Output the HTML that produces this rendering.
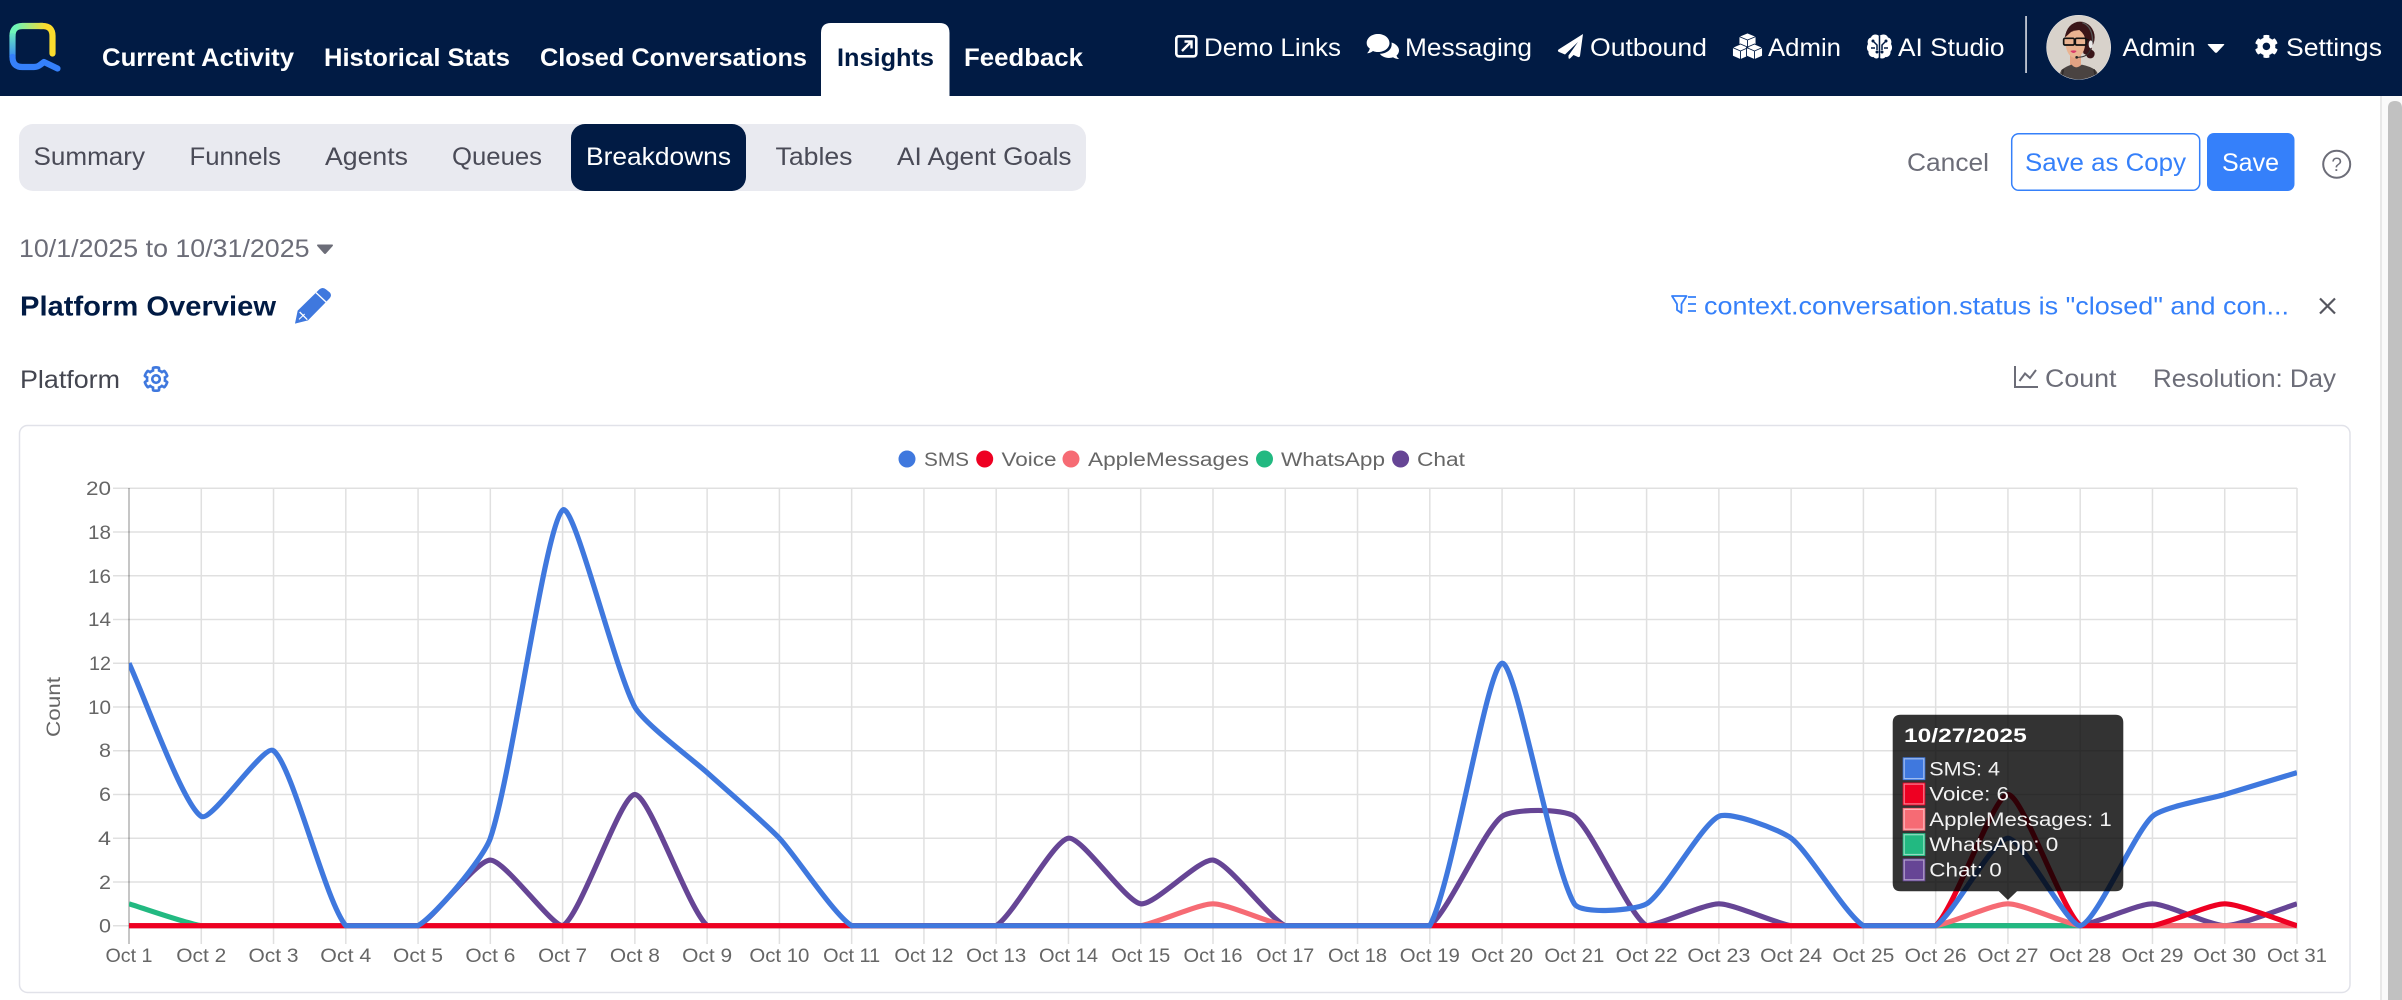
<!DOCTYPE html>
<html lang="en"><head><meta charset="utf-8"><title>Platform Overview</title>
<style>
html,body{margin:0;padding:0;background:#fff;width:2402px;height:1000px;overflow:hidden}
svg{display:block}
text{font-family:"Liberation Sans",Arial,sans-serif}
.n{font-size:25px;fill:#fff}
.b{font-weight:700}
.t{font-size:25px;fill:#4a4b57}
.g{font-size:25px;fill:#6c6d78}
.c{font-size:19px;fill:#666}
.x{text-anchor:middle}
.y{text-anchor:end}
.l{fill:none;stroke-width:5.2;vector-effect:non-scaling-stroke;stroke-linejoin:round}
.tt{font-size:19px;fill:#f2f2f2}
</style></head><body>
<svg xmlns="http://www.w3.org/2000/svg" width="2402" height="1000" viewBox="0 0 2402 1000">
<defs>
<linearGradient id="lgT" gradientUnits="userSpaceOnUse" x1="16" y1="0" x2="46" y2="0"><stop offset="0" stop-color="#6ef5b8"/><stop offset="1" stop-color="#fbdc2d"/></linearGradient>
<linearGradient id="lgL" gradientUnits="userSpaceOnUse" x1="0" y1="30" x2="0" y2="60"><stop offset="0" stop-color="#6ef5b8"/><stop offset="1" stop-color="#3580fa"/></linearGradient>
<clipPath id="plot"><rect x="129" y="484" width="2168" height="446"/></clipPath>
<clipPath id="av"><circle cx="176" cy="142" r="96"/></clipPath>
<path id="cog" d="M487.4 315.7l-42.6-24.6c4.3-23.2 4.3-47 0-70.2l42.6-24.6c4.9-2.8 7.1-8.6 5.5-14-11.1-35.6-30-67.8-54.7-94.6-3.8-4.1-10-5.1-14.8-2.3L380.8 110c-17.9-15.4-38.5-27.3-60.8-35.1V25.8c0-5.6-3.9-10.5-9.4-11.7-36.7-8.2-74.3-7.8-109.2 0-5.5 1.2-9.4 6.1-9.4 11.7V75c-22.2 7.9-42.8 19.8-60.8 35.1L88.7 85.5c-4.9-2.8-11-1.9-14.8 2.3-24.7 26.7-43.6 58.9-54.7 94.6-1.7 5.4.6 11.2 5.5 14L67.3 221c-4.3 23.2-4.3 47 0 70.2l-42.6 24.6c-4.9 2.8-7.1 8.6-5.5 14 11.1 35.6 30 67.8 54.7 94.6 3.8 4.1 10 5.1 14.8 2.3l42.6-24.6c17.9 15.4 38.5 27.3 60.8 35.1v49.2c0 5.6 3.9 10.5 9.4 11.7 36.7 8.2 74.3 7.8 109.2 0 5.5-1.2 9.4-6.1 9.4-11.7v-49.2c22.2-7.9 42.8-19.8 60.8-35.1l42.6 24.6c4.9 2.8 11 1.9 14.8-2.3 24.7-26.7 43.6-58.9 54.7-94.6 1.5-5.5-.7-11.3-5.6-14.1zM256 336c-44.1 0-80-35.9-80-80s35.9-80 80-80 80 35.9 80 80-35.9 80-80 80z"/>
</defs>

<!-- header -->
<rect width="2402" height="96" fill="#011b44"/>
<g fill="none" stroke-width="6.2" stroke-linecap="round" stroke-linejoin="round">
<path d="M52.5 53.5V36Q52.5 26 42.5 26H40" stroke="#fbdc2d"/>
<path d="M42.5 26H22.5Q12.5 26 12.5 36" stroke="url(#lgT)"/>
<path d="M12.5 36V57" stroke="url(#lgL)"/>
<path d="M12.5 57Q12.5 67 22.5 67H34Q37.5 67 40 65L44 62 57.5 68.5" stroke="#3580fa"/>
</g>
<path d="M821 96V33Q821 23 831 23H939.5Q949.5 23 949.5 33V96Z" fill="#fff"/>
<text class="n b" x="102" y="66" textLength="192" lengthAdjust="spacingAndGlyphs">Current Activity</text>
<text class="n b" x="324" y="66" textLength="186" lengthAdjust="spacingAndGlyphs">Historical Stats</text>
<text class="n b" x="540" y="66" textLength="267" lengthAdjust="spacingAndGlyphs">Closed Conversations</text>
<text class="n b" x="837" y="66" textLength="97" lengthAdjust="spacingAndGlyphs" style="fill:#011b44">Insights</text>
<text class="n b" x="964" y="66" textLength="119" lengthAdjust="spacingAndGlyphs">Feedback</text>

<!-- demo links icon -->
<rect x="1176.3" y="36.3" width="20" height="20" rx="2.5" fill="none" stroke="#fff" stroke-width="2.6"/>
<path d="M1182 51L1191 42M1184.5 41.500H1191.500V48.500" fill="none" stroke="#fff" stroke-width="2.400"/>
<text class="n" x="1204" y="56" textLength="137" lengthAdjust="spacingAndGlyphs">Demo Links</text>
<!-- messaging icon -->
<path d="M1378 34C1384.500 34 1389.500 38 1389.500 43C1389.500 48 1384.500 52 1378 52C1376 52 1374.500 51.700 1373 51C1371 52.500 1369 53.300 1367 53.300C1369 51.500 1369.500 49.500 1369.800 48.500C1367.500 47 1366.700 45 1366.700 43C1366.700 38 1371.500 34 1378 34Z" fill="#fff"/>
<path d="M1391.500 42.500C1396 43.800 1399 47 1399 50.500C1399 52.500 1398 54.300 1396.500 55.500C1397 57 1397.800 58 1399 59C1396.500 59 1394.500 58.300 1393 57.300C1391.500 57.800 1390.500 58 1389 58C1385 58 1381.500 56.300 1379.800 53.800C1386.500 53.800 1392.800 49.500 1391.500 42.500Z" fill="#fff"/>
<text class="n" x="1405" y="56" textLength="127" lengthAdjust="spacingAndGlyphs">Messaging</text>
<!-- plane icon -->
<path d="M1583 34L1558.500 49.500Q1557 51 1559 52L1565 54.500L1578 42L1568.500 55.500V58Q1569 59.500 1570.500 58L1573.500 55L1578 57Q1579.500 57.500 1580 56Z" fill="#fff"/>
<text class="n" x="1590" y="56" textLength="117" lengthAdjust="spacingAndGlyphs">Outbound</text>
<!-- cubes icon -->
<g fill="#fff" stroke="#011b44" stroke-width=".9" stroke-linejoin="round">
<path d="M1747.500 33L1756 36.500V46L1747.500 49.500L1739 46V36.500Z"/>
<path d="M1740.500 44L1748.500 47.500V56L1740.500 59.500L1732.500 56V47.500Z"/>
<path d="M1754.500 44L1762.500 47.500V56L1754.500 59.500L1746.500 56V47.500Z"/>
<path d="M1739 36.500L1747.500 40L1756 36.500M1747.500 40V48M1732.500 47.500L1740.500 51L1748.500 47.500M1740.500 51V59M1746.500 47.500L1754.500 51L1762.500 47.500M1754.500 51V59" fill="none"/>
</g>
<text class="n" x="1768" y="56" textLength="73" lengthAdjust="spacingAndGlyphs">Admin</text>
<!-- brain icon -->
<path d="M1879 36C1877 33.500 1872 34 1871 37.500C1868 38 1867 41.500 1868 44C1866.500 46.500 1866.500 49.500 1868.500 51.500C1868 55 1871 57.500 1873.500 57C1875 59 1878 59 1879 57C1880 59 1884 59 1885.500 57C1888 57.500 1891 55 1890.500 51.500C1892.500 49.500 1892.500 46.500 1891 44C1892 41.500 1891 38 1888 37.500C1887 34 1882 33.500 1879.500 36Z" fill="#fff"/>
<path d="M1879.500 36V58M1873 41L1877 45V50M1886 41L1882 45V50M1871 48H1875M1888 48H1884" fill="none" stroke="#011b44" stroke-width="1.500"/>
<g fill="#011b44"><circle cx="1873" cy="41" r="1.500"/><circle cx="1886" cy="41" r="1.500"/><circle cx="1877" cy="52" r="1.500"/><circle cx="1882" cy="52" r="1.500"/></g>
<text class="n" x="1898" y="56" textLength="106.500" lengthAdjust="spacingAndGlyphs">AI Studio</text>
<rect x="2025.300" y="16" width="1.500" height="57" fill="#e8eaf0"/>
<!-- avatar -->
<g transform="translate(2020 0) scale(.33333)">
<circle cx="176" cy="142" r="97" fill="#f4f4f4"/>
<g clip-path="url(#av)">
<rect x="70" y="40" width="210" height="210" fill="#d8d2cb"/>
<ellipse cx="180" cy="112" rx="44" ry="47" fill="#3a1518"/>
<circle cx="211" cy="162" r="13" fill="#3a1518"/>
<path d="M205 100Q226 130 208 170L190 160Z" fill="#3a1518"/>
<path d="M150 165H183V205H150Z" fill="#e2a283"/>
<path d="M136 108Q150 92 178 90Q196 104 196 122Q196 168 166 174Q142 172 136 132Z" fill="#eab391"/>
<path d="M134 112Q142 72 180 70Q160 90 140 108Z" fill="#3a1518"/>
<path d="M178 88Q200 100 198 130L208 122L205 86Z" fill="#3a1518"/>
<rect x="131" y="115" width="32" height="20" rx="4" fill="#eab391" stroke="#111" stroke-width="5"/>
<rect x="166" y="115" width="32" height="20" rx="4" fill="#eab391" stroke="#111" stroke-width="5"/>
<path d="M196 119H206" stroke="#111" stroke-width="4"/>
<path d="M151 153Q161 149 170 153Q161 165 151 153Z" fill="#d93a6b"/>
<path d="M112 240L124 210Q140 198 155 194Q168 210 185 194Q215 200 228 212L245 240Z" fill="#4a4341"/>
<path d="M130 208L124 240M222 208L230 240" stroke="#2f2a29" stroke-width="5" fill="none"/>
<path d="M187 68Q218 78 218 128" fill="none" stroke="#555" stroke-width="4"/>
<ellipse cx="212" cy="133" rx="6" ry="12" fill="#e9e9e9"/>
<path d="M212 146Q206 172 172 172" fill="none" stroke="#333" stroke-width="3"/>
<circle cx="170" cy="172" r="4" fill="#222"/>
</g></g>
<text class="n" x="2122.500" y="56" textLength="73" lengthAdjust="spacingAndGlyphs">Admin</text>
<path d="M2208.500 44H2223.500Q2224.800 44 2224 45L2217 52.500Q2216 53.300 2215 52.500L2208 45Q2207.200 44 2208.500 44Z" fill="#fff"/>
<use href="#cog" transform="translate(2254.500 34.500) scale(.0465)" fill="#fff"/>
<text class="n" x="2286" y="56" textLength="96" lengthAdjust="spacingAndGlyphs">Settings</text>

<!-- tabs -->
<rect x="19" y="124" width="1067" height="67" rx="14" fill="#e9eaf0"/>
<rect x="571" y="124" width="175" height="67" rx="14" fill="#011b44"/>
<text class="t" x="33.500" y="165" textLength="111.500" lengthAdjust="spacingAndGlyphs">Summary</text>
<text class="t" x="189.500" y="165" textLength="91.500" lengthAdjust="spacingAndGlyphs">Funnels</text>
<text class="t" x="325" y="165" textLength="83" lengthAdjust="spacingAndGlyphs">Agents</text>
<text class="t" x="452" y="165" textLength="90" lengthAdjust="spacingAndGlyphs">Queues</text>
<text class="t" x="586" y="165" textLength="145" lengthAdjust="spacingAndGlyphs" style="fill:#fff">Breakdowns</text>
<text class="t" x="775.500" y="165" textLength="77" lengthAdjust="spacingAndGlyphs">Tables</text>
<text class="t" x="897" y="165" textLength="174.500" lengthAdjust="spacingAndGlyphs">AI Agent Goals</text>

<!-- actions -->
<text class="g" x="1907" y="171" textLength="82" lengthAdjust="spacingAndGlyphs">Cancel</text>
<rect x="2011.700" y="133.700" width="188" height="56.600" rx="7" fill="#fff" stroke="#3580fa" stroke-width="1.500"/>
<text class="n" x="2025" y="171" textLength="161" lengthAdjust="spacingAndGlyphs" style="fill:#3580fa">Save as Copy</text>
<rect x="2207" y="133" width="87.500" height="58" rx="7" fill="#3580fa"/>
<text class="n" x="2222" y="171" textLength="57" lengthAdjust="spacingAndGlyphs">Save</text>
<circle cx="2336.700" cy="164.300" r="13.500" fill="none" stroke="#6c6d78" stroke-width="2"/>
<text x="2336.700" y="171" text-anchor="middle" style="font-size:19px;fill:#6c6d78">?</text>

<!-- date -->
<text class="g" x="19" y="257" textLength="290.500" lengthAdjust="spacingAndGlyphs">10/1/2025 to 10/31/2025</text>
<path d="M318 244.500H332Q333.500 244.500 332.700 246L326 253.500Q325 254.500 324 253.500L317.300 246Q316.500 244.500 318 244.500Z" fill="#6c6d78"/>

<!-- title row -->
<text x="20" y="315.500" textLength="256" lengthAdjust="spacingAndGlyphs" class="b" style="font-size:28px;fill:#011b44">Platform Overview</text>
<g transform="translate(0 280) scale(.33333)">
<path d="M885 131L893 92L958 28Q968 20 978 28L990 38Q997 47 988 56L924 121Z" fill="#3f78de"/>
<path d="M948 38L980 68M899 96L922 119" stroke="#fff" stroke-width="4" fill="none"/>
<path d="M897 118L914 102" stroke="#fff" stroke-width="3" fill="none"/>
</g>
<path d="M1672 296H1686.500L1681.500 304V313L1677 310V304Z" fill="none" stroke="#3580fa" stroke-width="1.800" stroke-linejoin="round"/>
<path d="M1688 297H1696M1688 304H1696M1688 311H1696" stroke="#3580fa" stroke-width="1.800"/>
<text x="1704" y="314.500" textLength="585" lengthAdjust="spacingAndGlyphs" style="font-size:25px;fill:#3580fa">context.conversation.status is "closed" and con...</text>
<path d="M2320 298.500L2335 313.500M2335 298.500L2320 313.500" stroke="#55565f" stroke-width="2.200"/>

<!-- platform row -->
<text x="20" y="388" textLength="100" lengthAdjust="spacingAndGlyphs" style="font-size:25px;fill:#444650">Platform</text>
<use href="#cog" transform="translate(144 367) scale(.047)" fill="none" stroke="#3f78de" stroke-width="56"/>
<path d="M2015 366V387H2038M2019.500 381L2025 373.500L2030 378L2036 370" fill="none" stroke="#6c6d78" stroke-width="2"/>
<text class="g" x="2045" y="387" textLength="71.500" lengthAdjust="spacingAndGlyphs">Count</text>
<text class="g" x="2153" y="387" textLength="183" lengthAdjust="spacingAndGlyphs">Resolution: Day</text>

<!-- card -->
<rect x="19.500" y="425.500" width="2330.500" height="567" rx="8" fill="#fff" stroke="#e1e2e9" stroke-width="1.500"/>

<!-- legend -->
<g>
<circle cx="907" cy="459" r="8.500" fill="#3f78de"/><circle cx="984.700" cy="459" r="8.500" fill="#ee0022"/><circle cx="1071" cy="459" r="8.500" fill="#f66b74"/><circle cx="1264.500" cy="459" r="8.500" fill="#22b981"/><circle cx="1400.600" cy="459" r="8.500" fill="#664595"/>
<text class="c" x="924" y="466" textLength="45" lengthAdjust="spacingAndGlyphs">SMS</text>
<text class="c" x="1001.500" y="466" textLength="55" lengthAdjust="spacingAndGlyphs">Voice</text>
<text class="c" x="1088" y="466" textLength="161" lengthAdjust="spacingAndGlyphs">AppleMessages</text>
<text class="c" x="1281" y="466" textLength="104" lengthAdjust="spacingAndGlyphs">WhatsApp</text>
<text class="c" x="1417" y="466" textLength="48" lengthAdjust="spacingAndGlyphs">Chat</text>
</g>

<!-- grid -->
<path stroke="#000" stroke-opacity=".12" stroke-width="1.500" fill="none" d="M113 488.300H2297M113 532H2297M113 575.800H2297M113 619.500H2297M113 663.200H2297M113 707H2297M113 750.700H2297M113 794.500H2297M113 838.200H2297M113 882H2297M113 925.700H2297
M201.270 488V944M273.530 488V944M345.800 488V944M418.070 488V944M490.330 488V944M562.600 488V944M634.870 488V944M707.130 488V944M779.400 488V944M851.670 488V944M923.930 488V944M996.200 488V944M1068.470 488V944M1140.730 488V944M1213 488V944M1285.270 488V944M1357.530 488V944M1429.800 488V944M1502.070 488V944M1574.330 488V944M1646.600 488V944M1718.870 488V944M1791.130 488V944M1863.400 488V944M1935.670 488V944M2007.930 488V944M2080.200 488V944M2152.470 488V944M2224.730 488V944M2297 488V944"/>
<path d="M129 488V944" stroke="#000" stroke-opacity=".3" stroke-width="1.500"/>

<!-- series -->
<g clip-path="url(#plot)"><g transform="translate(0 925.7) scale(1 -21.87)">
<path class="l" stroke="#664595" d="M129 0L418.070 0C434.680 .345 475.880 3 490.330 3C504.780 3 551.200 0 562.600 0C580.100 .364 620.420 6 634.870 6C649.320 6 687.630 .81 707.130 0L996.200 0C1013.860 .49 1052.930 3.890 1068.470 4C1081.840 4.090 1125.240 1.107 1140.730 1C1154.150 .907 1199.590 3.090 1213 3C1228.500 2.890 1268.660 .345 1285.270 0L1429.800 0C1448.440 .645 1483.440 4.360 1502.070 5C1512.350 5.360 1564.060 5.360 1574.330 5C1592.970 4.360 1628.260 .51 1646.600 0C1657.170 0 1704.420 1 1718.870 1C1733.320 1 1776.360 .102 1791.130 0L2080.200 0C2094.970 .102 2138.020 1 2152.470 1C2166.920 1 2210.280 0 2224.730 0C2239.180 0 2282.550 .8 2297 1"/>
<path class="l" stroke="#22b981" d="M129 1C143.450 .8 186.500 .102 201.270 0L2297 0"/>
<path class="l" stroke="#f66b74" d="M129 0L1140.730 0C1155.500 .102 1198.550 1 1213 1C1227.450 1 1270.500 .102 1285.270 0L1935.670 0C1950.440 .102 1993.480 1 2007.930 1C2022.380 1 2065.430 .102 2080.200 0L2297 0"/>
<path class="l" stroke="#ee0022" d="M129 0L1935.670 0C1955.170 .81 1993.480 6 2007.930 6C2022.380 6 2060.700 .81 2080.200 0L2152.470 0C2167.240 .102 2210.280 1 2224.730 1C2239.180 1 2282.550 .2 2297 0"/>
<path class="l" stroke="#3f78de" d="M129 12C143.450 10.600 182.930 5.510 201.270 5C211.850 4.710 263.700 8.340 273.530 8C292.600 7.340 324.880 1.160 345.800 0C353.790 0 406.820 0 418.070 0C435.730 .49 483.030 3.040 490.330 4C511.930 6.840 544.800 18.260 562.600 19C573.700 19.460 615.150 11.640 634.870 10C644.050 9.240 692.670 7.600 707.130 7C721.580 6.400 766.030 4.650 779.400 4C794.940 3.250 834 .49 851.670 0L1429.800 0C1452.650 1.900 1487.030 11.900 1502.070 12C1515.950 12.100 1551.880 2.710 1574.330 1C1580.790 .51 1635.350 .69 1646.600 1C1664.270 1.490 1701.510 4.640 1718.870 5C1730.420 5.240 1779.580 4.400 1791.130 4C1808.490 3.400 1845.740 .49 1863.400 0L1935.670 0C1953.330 .49 1993.480 4 2007.930 4C2022.380 4 2066.780 0 2080.200 0C2095.700 .107 2134.130 4.240 2152.470 5C2163.030 5.440 2210.280 5.800 2224.730 6C2239.180 6.200 2282.550 6.800 2297 7"/>
</g></g>

<!-- y ticks -->
<g class="c y">
<text class="c y" x="111" y="495" textLength="25" lengthAdjust="spacingAndGlyphs">20</text>
<text class="c y" x="111" y="539" textLength="23" lengthAdjust="spacingAndGlyphs">18</text>
<text class="c y" x="111" y="583" textLength="23" lengthAdjust="spacingAndGlyphs">16</text>
<text class="c y" x="111" y="626" textLength="23" lengthAdjust="spacingAndGlyphs">14</text>
<text class="c y" x="111" y="670" textLength="22" lengthAdjust="spacingAndGlyphs">12</text>
<text class="c y" x="111" y="714" textLength="23" lengthAdjust="spacingAndGlyphs">10</text>
<text class="c y" x="111" y="757" textLength="12" lengthAdjust="spacingAndGlyphs">8</text>
<text class="c y" x="111" y="801" textLength="12" lengthAdjust="spacingAndGlyphs">6</text>
<text class="c y" x="111" y="845" textLength="13" lengthAdjust="spacingAndGlyphs">4</text>
<text class="c y" x="111" y="889" textLength="12" lengthAdjust="spacingAndGlyphs">2</text>
<text class="c y" x="111" y="932.500" textLength="12" lengthAdjust="spacingAndGlyphs">0</text>
</g>
<text class="c" transform="translate(60 737) rotate(-90)" textLength="60" lengthAdjust="spacingAndGlyphs">Count</text>

<!-- x labels -->
<text class="c x" x="129" y="962" textLength="47" lengthAdjust="spacingAndGlyphs">Oct 1</text>
<text class="c x" x="201.270" y="962" textLength="50" lengthAdjust="spacingAndGlyphs">Oct 2</text>
<text class="c x" x="273.530" y="962" textLength="50" lengthAdjust="spacingAndGlyphs">Oct 3</text>
<text class="c x" x="345.800" y="962" textLength="51" lengthAdjust="spacingAndGlyphs">Oct 4</text>
<text class="c x" x="418.070" y="962" textLength="50" lengthAdjust="spacingAndGlyphs">Oct 5</text>
<text class="c x" x="490.330" y="962" textLength="50" lengthAdjust="spacingAndGlyphs">Oct 6</text>
<text class="c x" x="562.600" y="962" textLength="49" lengthAdjust="spacingAndGlyphs">Oct 7</text>
<text class="c x" x="634.870" y="962" textLength="50" lengthAdjust="spacingAndGlyphs">Oct 8</text>
<text class="c x" x="707.130" y="962" textLength="50" lengthAdjust="spacingAndGlyphs">Oct 9</text>
<text class="c x" x="779.400" y="962" textLength="60" lengthAdjust="spacingAndGlyphs">Oct 10</text>
<text class="c x" x="851.670" y="962" textLength="57" lengthAdjust="spacingAndGlyphs">Oct 11</text>
<text class="c x" x="923.930" y="962" textLength="59" lengthAdjust="spacingAndGlyphs">Oct 12</text>
<text class="c x" x="996.200" y="962" textLength="60" lengthAdjust="spacingAndGlyphs">Oct 13</text>
<text class="c x" x="1068.470" y="962" textLength="59" lengthAdjust="spacingAndGlyphs">Oct 14</text>
<text class="c x" x="1140.730" y="962" textLength="59" lengthAdjust="spacingAndGlyphs">Oct 15</text>
<text class="c x" x="1213" y="962" textLength="59" lengthAdjust="spacingAndGlyphs">Oct 16</text>
<text class="c x" x="1285.270" y="962" textLength="58" lengthAdjust="spacingAndGlyphs">Oct 17</text>
<text class="c x" x="1357.530" y="962" textLength="59" lengthAdjust="spacingAndGlyphs">Oct 18</text>
<text class="c x" x="1429.800" y="962" textLength="60" lengthAdjust="spacingAndGlyphs">Oct 19</text>
<text class="c x" x="1502.070" y="962" textLength="62" lengthAdjust="spacingAndGlyphs">Oct 20</text>
<text class="c x" x="1574.330" y="962" textLength="60" lengthAdjust="spacingAndGlyphs">Oct 21</text>
<text class="c x" x="1646.600" y="962" textLength="62" lengthAdjust="spacingAndGlyphs">Oct 22</text>
<text class="c x" x="1718.870" y="962" textLength="63" lengthAdjust="spacingAndGlyphs">Oct 23</text>
<text class="c x" x="1791.130" y="962" textLength="62" lengthAdjust="spacingAndGlyphs">Oct 24</text>
<text class="c x" x="1863.400" y="962" textLength="62" lengthAdjust="spacingAndGlyphs">Oct 25</text>
<text class="c x" x="1935.670" y="962" textLength="62" lengthAdjust="spacingAndGlyphs">Oct 26</text>
<text class="c x" x="2007.930" y="962" textLength="61" lengthAdjust="spacingAndGlyphs">Oct 27</text>
<text class="c x" x="2080.200" y="962" textLength="62" lengthAdjust="spacingAndGlyphs">Oct 28</text>
<text class="c x" x="2152.470" y="962" textLength="62" lengthAdjust="spacingAndGlyphs">Oct 29</text>
<text class="c x" x="2224.730" y="962" textLength="63" lengthAdjust="spacingAndGlyphs">Oct 30</text>
<text class="c x" x="2297" y="962" textLength="60" lengthAdjust="spacingAndGlyphs">Oct 31</text>

<!-- tooltip -->
<path d="M1900.700 714.700H2115.300Q2123.300 714.700 2123.300 722.700V883.300Q2123.300 891.300 2115.300 891.300H2017L2007.900 900L1998.800 891.300H1900.700Q1892.700 891.300 1892.700 883.300V722.700Q1892.700 714.700 1900.700 714.700Z" fill="#000" fill-opacity=".8"/>
<text class="b" x="1904" y="742" textLength="122.700" lengthAdjust="spacingAndGlyphs" style="font-size:19px;fill:#fff">10/27/2025</text>
<rect x="1902.700" y="757.300" width="22.600" height="22.800" fill="#3f78de"/>
<rect x="1902.700" y="782.600" width="22.600" height="22.800" fill="#ee0022"/>
<rect x="1902.700" y="807.900" width="22.600" height="22.800" fill="#f66b74"/>
<rect x="1902.700" y="833.200" width="22.600" height="22.800" fill="#22b981"/>
<rect x="1902.700" y="858.500" width="22.600" height="22.800" fill="#664595"/>
<g fill="none" stroke="#fff" stroke-opacity=".5" stroke-width="1.200">
<rect x="1904.200" y="758.800" width="19.600" height="19.800"/>
<rect x="1904.200" y="784.100" width="19.600" height="19.800"/>
<rect x="1904.200" y="809.400" width="19.600" height="19.800"/>
<rect x="1904.200" y="834.700" width="19.600" height="19.800"/>
<rect x="1904.200" y="860" width="19.600" height="19.800"/>
</g>
<text class="tt" x="1929.300" y="775.300" textLength="70.700" lengthAdjust="spacingAndGlyphs">SMS: 4</text>
<text class="tt" x="1929.300" y="800.600" textLength="79.700" lengthAdjust="spacingAndGlyphs">Voice: 6</text>
<text class="tt" x="1929.300" y="825.900" textLength="182.400" lengthAdjust="spacingAndGlyphs">AppleMessages: 1</text>
<text class="tt" x="1929.300" y="851.200" textLength="129" lengthAdjust="spacingAndGlyphs">WhatsApp: 0</text>
<text class="tt" x="1929.300" y="876.500" textLength="72.400" lengthAdjust="spacingAndGlyphs">Chat: 0</text>

<!-- scrollbar -->
<rect x="2380" y="96" width="22" height="904" fill="#fafafa"/>
<rect x="2380" y="96" width="2" height="904" fill="#e8e8e8"/>
<path d="M2388 1000V108Q2388 101 2395 101Q2402 101 2402 108V1000Z" fill="#c1c1c1"/>
</svg>
</body></html>
